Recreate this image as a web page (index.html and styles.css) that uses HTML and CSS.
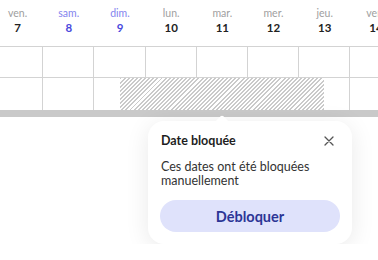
FILE: index.html
```html
<!DOCTYPE html>
<html lang="fr">
<head>
<meta charset="UTF-8" />
<meta name="viewport" content="width=device-width, initial-scale=1" />
<title>Calendrier</title>
<link rel="stylesheet" href="styles.css">
</head>
<body>

<div class="cal">
  <div class="strip head">
    <div class="day"><span class="dname">ven.</span><span class="dnum">7</span></div>
    <div class="day weekend"><span class="dname">sam.</span><span class="dnum">8</span></div>
    <div class="day weekend"><span class="dname">dim.</span><span class="dnum">9</span></div>
    <div class="day"><span class="dname">lun.</span><span class="dnum">10</span></div>
    <div class="day"><span class="dname">mar.</span><span class="dnum">11</span></div>
    <div class="day"><span class="dname">mer.</span><span class="dnum">12</span></div>
    <div class="day"><span class="dname">jeu.</span><span class="dnum">13</span></div>
    <div class="day"><span class="dname">ven.</span><span class="dnum">14</span></div>
  </div>

  <div class="strip row first">
    <div class="cell"></div><div class="cell"></div><div class="cell"></div><div class="cell"></div>
    <div class="cell"></div><div class="cell"></div><div class="cell"></div><div class="cell"></div>
  </div>
  <div class="strip row">
    <div class="cell"></div><div class="cell"></div><div class="cell"></div><div class="cell"></div>
    <div class="cell"></div><div class="cell"></div><div class="cell"></div><div class="cell"></div>
  </div>

  <!-- période bloquée -->
  <div class="blocked"></div>

  <div class="bar"></div>
</div>

<div class="pop-wrap">
  <div class="popover">
    <span class="arrow"></span>
    <div class="pop-head">
      <h3>Date bloquée</h3>
      <button class="close" aria-label="Fermer">
        <svg width="10" height="10" viewBox="0 0 10 10"><path d="M1 1L9 9M9 1L1 9" stroke="#555" stroke-width="1.3" stroke-linecap="round"/></svg>
      </button>
    </div>
    <p>Ces dates ont été bloquées manuellement</p>
    <button class="unblock">Débloquer</button>
  </div>
</div>

</body>
</html>
```

FILE: styles.css
```css
* { box-sizing: border-box; }
body { margin: 0; background: #fff; font-family: Lato, "Noto Sans", sans-serif; color: #222; }

.cal { position: relative; width: 378px; overflow: hidden; }
.strip { display: flex; margin-left: -8px; }

.head { height: 47px; border-bottom: 1px solid #d3d3d3; }
.day {
  flex: none; width: 51.2px; display: flex; flex-direction: column; align-items: center;
  padding-top: 6px;
}
.dname { font-size: 10.5px; line-height: 14px; color: #a0a0a0; }
.dnum { font-size: 11.5px; line-height: 14px; font-weight: 700; color: #222; margin-top: 1px; }
.weekend .dname { color: #8383ee; }
.weekend .dnum { color: #4949dd; }

.row { height: 32px; }
.row.first { height: 31px; border-bottom: 1px solid #d3d3d3; }
.cell { flex: none; width: 51.2px; height: 100%; border-right: 1px solid #d3d3d3; }

.blocked {
  position: absolute; left: 120px; top: 78px; width: 204px; height: 32px;
  background: repeating-linear-gradient(135deg, #cacaca 0 1.4px, #fff 1.4px 2.9px);
}

.bar { height: 7px; background: #c9c9c9; }

.pop-wrap { padding: 4px 0 0 148px; }
.popover {
  position: relative; width: 204px; background: #fff; border-radius: 16px;
  padding: 12px;
  box-shadow: 0 4px 24px rgba(0,0,0,0.09);
}
.arrow {
  position: absolute; top: -4px; left: 69px; width: 10px; height: 10px;
  background: #fff; transform: rotate(45deg); border-radius: 2px;
}
.pop-head { display: flex; justify-content: space-between; align-items: center; padding-left: 1px; }
.pop-head h3 { margin: 0; font-size: 12.5px; line-height: 16px; font-weight: 700; color: #1e1e1e; }
.close { background: none; border: none; padding: 0; width: 16px; height: 16px; display: flex; align-items: center; justify-content: center; margin-right: 3px; cursor: pointer; }

.popover p { margin: 11px 0 12px 1px; font-size: 12.5px; line-height: 14px; color: #333; }

.unblock {
  display: block; width: 100%; height: 32px; border: none; border-radius: 16px;
  background: #dfe2fb; color: #2c3596; font-family: inherit; font-size: 14.5px; font-weight: 700;
  cursor: pointer;
}
```
